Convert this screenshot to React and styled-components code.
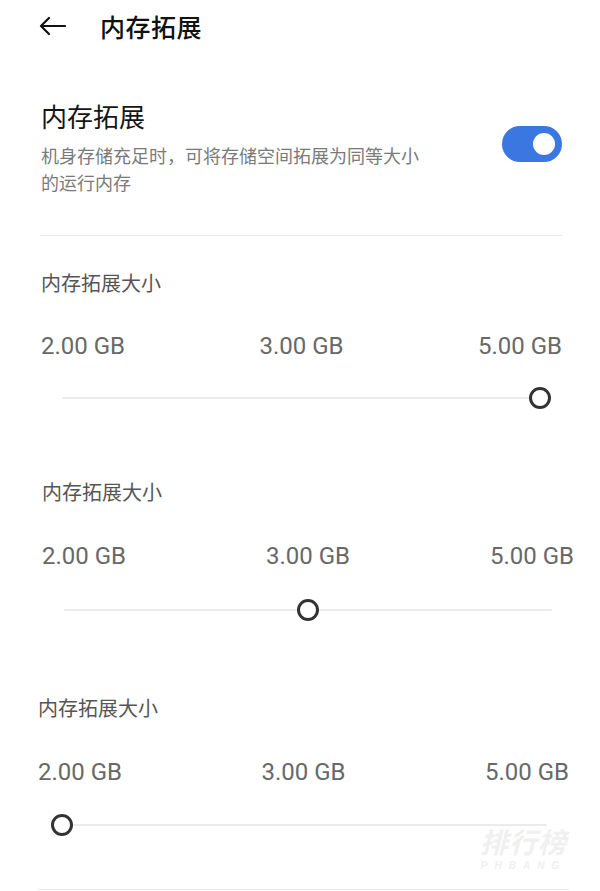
import React from "react";
import styled, { createGlobalStyle } from "styled-components";

const GlobalStyle = createGlobalStyle`
  html, body { margin: 0; padding: 0; background: #ffffff; }
  body { font-family: "Noto Sans CJK SC", "Noto Sans", sans-serif; }
`;

const Page = styled.div`
  position: relative;
  width: 600px;
  height: 891px;
  overflow: hidden;
  background: #ffffff;
`;

const Header = styled.header`
  height: 52px;
  display: flex;
  align-items: center;
  gap: 34px;
  padding-left: 39px;
`;

const BackIcon = styled.svg`
  width: 27px;
  height: 20px;
  flex: none;
`;

const HeaderTitle = styled.h1`
  margin: 0;
  font-size: 25px;
  font-weight: 500;
  color: #111111;
  letter-spacing: 0.5px;
`;

const SwitchRow = styled.div`
  display: flex;
  align-items: flex-start;
  justify-content: space-between;
  margin: 47px 38px 0 41px;
`;

const SwitchText = styled.div`
  display: flex;
  flex-direction: column;
`;

const SwitchTitle = styled.div`
  font-size: 26px;
  line-height: 34px;
  color: #151515;
`;

const SwitchDesc = styled.div`
  margin-top: 9px;
  max-width: 392px;
  font-size: 18px;
  line-height: 27px;
  color: #7a7a7a;
`;

const Toggle = styled.div`
  position: relative;
  margin-top: 27px;
  width: 60px;
  height: 36px;
  border-radius: 18px;
  background: ${(p) => (p.$on ? "#3a77e0" : "#cccccc")};
  flex: none;
`;

const ToggleKnob = styled.span`
  position: absolute;
  top: 7px;
  ${(p) => (p.$on ? "right: 7px;" : "left: 7px;")}
  width: 22px;
  height: 22px;
  border-radius: 50%;
  background: #ffffff;
`;

const Divider = styled.hr`
  margin: ${(p) => p.$margin};
  border: none;
  height: 1px;
  background: #e8e8e8;
`;

const Section = styled.section`
  display: flex;
  flex-direction: column;
  padding: ${(p) => p.$top}px ${(p) => p.$right}px 0 ${(p) => p.$left}px;
`;

const SectionLabel = styled.div`
  font-size: 20px;
  line-height: 28px;
  color: #555555;
`;

const Values = styled.div`
  display: flex;
  justify-content: space-between;
  margin-top: ${(p) => p.$gap}px;
  font-family: Roboto, "Liberation Sans", sans-serif;
  font-size: 24px;
  line-height: 30px;
  color: #686868;
`;

const SliderRow = styled.div`
  position: relative;
  height: 30px;
  margin: ${(p) => p.$gap}px 22px 0 ${(p) => p.$inset}px;
  display: flex;
  align-items: center;
`;

const Track = styled.div`
  width: 100%;
  height: 2px;
  border-radius: 1px;
  background: #ebebeb;
`;

const Thumb = styled.span`
  position: absolute;
  top: 50%;
  width: 22px;
  height: 22px;
  box-sizing: border-box;
  border-radius: 50%;
  border: 3px solid #333333;
  background: #ffffff;
  transform: translate(-50%, -50%);
`;

const Watermark = styled.div`
  position: absolute;
  left: 480px;
  top: 826px;
  display: flex;
  flex-direction: column;
  align-items: center;
  gap: 4px;
  color: #f0f0f0;
  font-style: italic;
  pointer-events: none;
`;

const WatermarkMain = styled.span`
  font-size: 28px;
  font-weight: 700;
  line-height: 30px;
  letter-spacing: 1px;
`;

const WatermarkSub = styled.span`
  font-family: "Liberation Sans", sans-serif;
  font-size: 10px;
  font-weight: 700;
  letter-spacing: 7px;
  line-height: 12px;
`;

const sections = [
  { top: 33, left: 41, right: 38, labelGap: 34, sliderGap: 22, inset: 21, pct: 100 },
  { top: 65, left: 42, right: 26, labelGap: 35, sliderGap: 24, inset: 22, pct: 50 },
  { top: 69, left: 38, right: 31, labelGap: 35, sliderGap: 23, inset: 24, pct: 0 },
];

export default function App() {
  return (
    <Page>
      <GlobalStyle />
      <Header>
        <BackIcon viewBox="0 0 27 20" fill="none" stroke="#111" strokeWidth="2.2" strokeLinecap="round" strokeLinejoin="round">
          <path d="M26 10H2M10 2L2 10l8 8" />
        </BackIcon>
        <HeaderTitle>内存拓展</HeaderTitle>
      </Header>

      <SwitchRow>
        <SwitchText>
          <SwitchTitle>内存拓展</SwitchTitle>
          <SwitchDesc>机身存储充足时，可将存储空间拓展为同等大小的运行内存</SwitchDesc>
        </SwitchText>
        <Toggle $on>
          <ToggleKnob $on />
        </Toggle>
      </SwitchRow>

      <Divider $margin="39px 38px 0 40px" />

      {sections.map((s, i) => (
        <Section key={i} $top={s.top} $left={s.left} $right={s.right}>
          <SectionLabel>内存拓展大小</SectionLabel>
          <Values $gap={s.labelGap}>
            <span>2.00 GB</span>
            <span>3.00 GB</span>
            <span>5.00 GB</span>
          </Values>
          <SliderRow $gap={s.sliderGap} $inset={s.inset}>
            <Track />
            <Thumb style={{ left: `${s.pct}%` }} />
          </SliderRow>
        </Section>
      ))}

      <Divider $margin="49px 31px 0 38px" />

      <Watermark>
        <WatermarkMain>排行榜</WatermarkMain>
        <WatermarkSub>PHBANG</WatermarkSub>
      </Watermark>
    </Page>
  );
}
